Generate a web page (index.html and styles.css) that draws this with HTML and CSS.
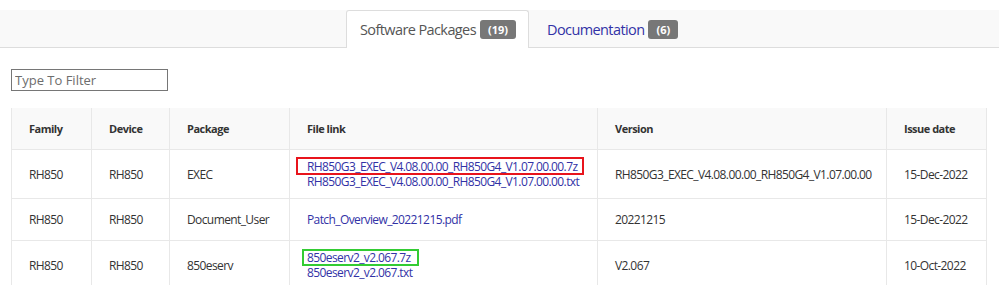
FILE: index.html
```html
<!DOCTYPE html>
<html>
<head>
    <title>Software Packages</title>
    <link rel="stylesheet" href="styles.css">
</head>
<body>
    <div class="tabBar">
        <ul class="tabs">
            <li class="tab active">Software Packages <span class="badge">(19)</span></li>
            <li class="tab"><a href="#">Documentation</a> <span class="badge">(6)</span></li>
        </ul>
    </div>
    <div class="content">
        <input type="text" id="filter" class="filter" placeholder="Type To Filter">
        <table class="packages">
            <colgroup>
                <col style="width: 80px">
                <col style="width: 78px">
                <col style="width: 120px">
                <col style="width: 308px">
                <col style="width: 289px">
                <col style="width: 100px">
            </colgroup>
            <thead>
                <tr>
                    <th>Family</th>
                    <th>Device</th>
                    <th>Package</th>
                    <th>File link</th>
                    <th>Version</th>
                    <th>Issue date</th>
                </tr>
            </thead>
            <tbody>
                <tr>
                    <td>RH850</td>
                    <td>RH850</td>
                    <td>EXEC</td>
                    <td class="files">
                        <a href="#" class="mark red">RH850G3_EXEC_V4.08.00.00_RH850G4_V1.07.00.00.7z</a>
                        <a href="#">RH850G3_EXEC_V4.08.00.00_RH850G4_V1.07.00.00.txt</a>
                    </td>
                    <td>RH850G3_EXEC_V4.08.00.00_RH850G4_V1.07.00.00</td>
                    <td>15-Dec-2022</td>
                </tr>
                <tr>
                    <td>RH850</td>
                    <td>RH850</td>
                    <td>Document_User</td>
                    <td class="files single">
                        <a href="#">Patch_Overview_20221215.pdf</a>
                    </td>
                    <td>20221215</td>
                    <td>15-Dec-2022</td>
                </tr>
                <tr>
                    <td>RH850</td>
                    <td>RH850</td>
                    <td>850eserv</td>
                    <td class="files">
                        <a href="#" class="mark green">850eserv2_v2.067.7z</a>
                        <a href="#">850eserv2_v2.067.txt</a>
                    </td>
                    <td>V2.067</td>
                    <td>10-Oct-2022</td>
                </tr>
            </tbody>
        </table>
    </div>
</body>
</html>
```

FILE: styles.css
```css
body {
    margin: 0;
    font-family: "Open Sans", Arial, sans-serif;
    color: #333;
    background-color: #fff;
}

a {
    color: #3232a6;
    text-decoration: none;
}

.tabBar {
    margin-top: 10px;
    background-color: #f9f9f9;
    border-bottom: 1px solid #ddd;
}

.tabs {
    display: flex;
    margin: 0;
    padding: 0 0 0 346px;
    list-style: none;
}

.tab {
    display: flex;
    align-items: center;
    height: 36px;
    padding: 0 14px 0 17px;
    font-size: 14.5px;
    letter-spacing: -0.6px;
    color: #555;
    margin-bottom: -1px;
    border: 1px solid transparent;
    border-bottom: none;
}

.tab.active {
    padding: 0 12px 0 13px;
    height: 37px;
    background-color: #fff;
    border-color: #ddd;
    border-radius: 3px 3px 0 0;
}

.badge {
    display: inline-block;
    margin-left: 4px;
    padding: 0 8px;
    height: 19px;
    line-height: 20px;
    font-size: 11px;
    font-weight: bold;
    letter-spacing: 0;
    color: #fff;
    background-color: #777;
    border-radius: 3px;
}

.content {
    padding: 21px 13px 0 11px;
}

.filter {
    display: block;
    box-sizing: border-box;
    width: 157px;
    height: 22px;
    margin: 0 0 17px 0;
    padding: 1px 3px;
    border: 1px solid #767676;
    font-family: inherit;
    font-size: 13px;
}

.filter::placeholder {
    color: #6d6d6d;
}

.packages {
    table-layout: fixed;
    width: 975px;
    border-collapse: collapse;
    font-size: 12px;
    line-height: 15px;
    letter-spacing: -0.6px;
}

.packages th, .packages td {
    border: 1px solid #e8e8e8;
    padding: 13px 17px;
    text-align: left;
    vertical-align: middle;
    white-space: nowrap;
}

.packages th {
    background-color: #f9f9f9;
    border-top: none;
    font-weight: bold;
    font-size: 11px;
    letter-spacing: -0.5px;
}

.packages td.files {
    padding: 9px 17px;
}

.packages td.files.single {
    padding: 13px 17px;
}

.files a {
    display: block;
    width: fit-content;
}

.mark {
    position: relative;
}

.mark::after {
    content: "";
    position: absolute;
    top: -2px;
    bottom: -1px;
    left: -11px;
    right: -7px;
    border: 2px solid #e8141c;
}

.mark.green::after {
    left: -5px;
    right: -8px;
    top: -1px;
    bottom: -1px;
    border-color: #33cc33;
}
```
